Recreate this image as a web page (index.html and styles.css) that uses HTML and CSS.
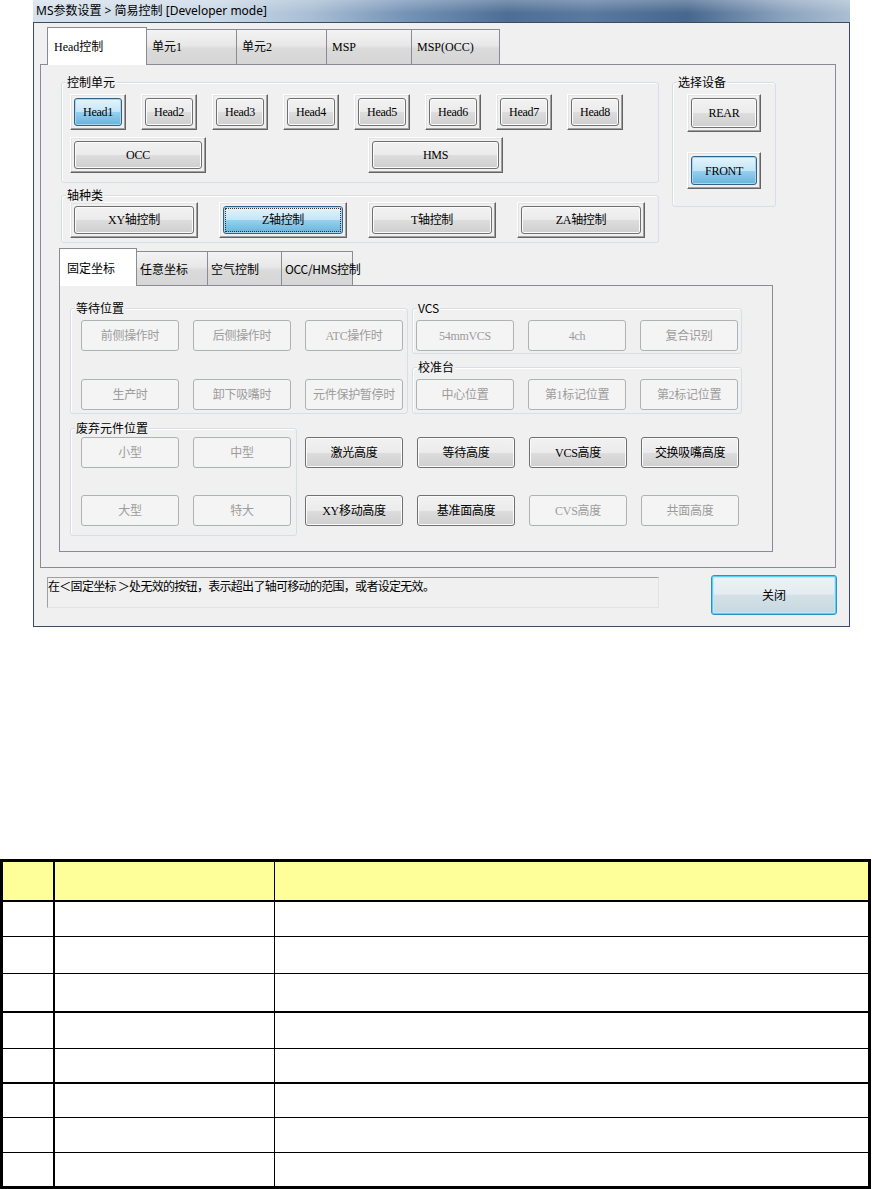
FILE: index.html
```html
<!DOCTYPE html>
<html lang="zh-CN">
<head>
<meta charset="utf-8">
<title>MS参数设置 &gt; 简易控制</title>
<link rel="stylesheet" href="styles.css">
</head>
<body>
<div class="window">
  <div class="titlebar"><span class="title">MS参数设置 &gt; 简易控制 [Developer mode]</span></div>
  <div class="win-body">
    <div class="tabs main-tabs">
      <div class="tab active w-head">Head控制</div>
      <div class="tab w-u1">单元1</div>
      <div class="tab w-u2">单元2</div>
      <div class="tab w-msp">MSP</div>
      <div class="tab w-mspocc">MSP(OCC)</div>
    </div>
    <div class="panel main-panel">
      <div class="top-area">
        <div class="left-col">
          <div class="group g-unit">
            <span class="glabel">控制单元</span>
            <div class="head-row">
              <div class="frame f-head"><div class="btn blue">Head1</div></div>
              <div class="frame f-head"><div class="btn">Head2</div></div>
              <div class="frame f-head"><div class="btn">Head3</div></div>
              <div class="frame f-head"><div class="btn">Head4</div></div>
              <div class="frame f-head"><div class="btn">Head5</div></div>
              <div class="frame f-head"><div class="btn">Head6</div></div>
              <div class="frame f-head"><div class="btn">Head7</div></div>
              <div class="frame f-head"><div class="btn">Head8</div></div>
            </div>
            <div class="occ-row">
              <div class="frame f-wide"><div class="btn">OCC</div></div>
              <div class="frame f-wide f-hms"><div class="btn">HMS</div></div>
            </div>
          </div>
          <div class="group g-axis">
            <span class="glabel">轴种类</span>
            <div class="axis-row">
              <div class="frame f-axis"><div class="btn">XY轴控制</div></div>
              <div class="frame f-axis"><div class="btn blue focus">Z轴控制</div></div>
              <div class="frame f-axis"><div class="btn">T轴控制</div></div>
              <div class="frame f-axis"><div class="btn">ZA轴控制</div></div>
            </div>
          </div>
        </div>
        <div class="group g-dev">
          <span class="glabel">选择设备</span>
          <div class="frame f-dev"><div class="btn">REAR</div></div>
          <div class="frame f-dev f-front"><div class="btn blue">FRONT</div></div>
        </div>
      </div>

      <div class="tabs sub-tabs">
        <div class="tab stab active w-fix">固定坐标</div>
        <div class="tab stab w-any">任意坐标</div>
        <div class="tab stab w-air">空气控制</div>
        <div class="tab stab w-occ">OCC/HMS控制</div>
      </div>
      <div class="panel sub-panel">
        <div class="sp-top">
          <div class="group g-wait">
            <span class="glabel">等待位置</span>
            <div class="btn-grid cols3">
              <div class="btn dis">前侧操作时</div>
              <div class="btn dis">后侧操作时</div>
              <div class="btn dis">ATC操作时</div>
              <div class="btn dis">生产时</div>
              <div class="btn dis">卸下吸嘴时</div>
              <div class="btn dis">元件保护暂停时</div>
            </div>
          </div>
          <div class="sp-right">
            <div class="group g-vcs">
              <span class="glabel">VCS</span>
              <div class="btn-grid cols3">
                <div class="btn dis">54mmVCS</div>
                <div class="btn dis">4ch</div>
                <div class="btn dis">复合识别</div>
              </div>
            </div>
            <div class="group g-cal">
              <span class="glabel">校准台</span>
              <div class="btn-grid cols3">
                <div class="btn dis">中心位置</div>
                <div class="btn dis">第1标记位置</div>
                <div class="btn dis">第2标记位置</div>
              </div>
            </div>
          </div>
        </div>
        <div class="sp-bottom">
          <div class="group g-waste">
            <span class="glabel">废弃元件位置</span>
            <div class="btn-grid cols2">
              <div class="btn dis">小型</div>
              <div class="btn dis">中型</div>
              <div class="btn dis">大型</div>
              <div class="btn dis">特大</div>
            </div>
          </div>
          <div class="btn-grid cols4 act-grid">
            <div class="btn">激光高度</div>
            <div class="btn">等待高度</div>
            <div class="btn">VCS高度</div>
            <div class="btn">交换吸嘴高度</div>
            <div class="btn">XY移动高度</div>
            <div class="btn">基准面高度</div>
            <div class="btn dis">CVS高度</div>
            <div class="btn dis">共面高度</div>
          </div>
        </div>
      </div>
    </div>
    <div class="status-row">
      <div class="status">在＜固定坐标 ＞处无效的按钮，表示超出了轴可移动的范围，或者设定无效。</div>
      <div class="btn close-btn">关闭</div>
    </div>
  </div>
</div>

<table class="grid-table">
  <tr class="r-head"><td class="c1"></td><td class="c2"></td><td class="c3"></td></tr>
  <tr class="r1"><td class="c1"></td><td class="c2"></td><td class="c3"></td></tr>
  <tr class="r2"><td class="c1"></td><td class="c2"></td><td class="c3"></td></tr>
  <tr class="r3 thick"><td class="c1"></td><td class="c2"></td><td class="c3"></td></tr>
  <tr class="r4"><td class="c1"></td><td class="c2"></td><td class="c3"></td></tr>
  <tr class="r5 thick"><td class="c1"></td><td class="c2"></td><td class="c3"></td></tr>
  <tr class="r6"><td class="c1"></td><td class="c2"></td><td class="c3"></td></tr>
  <tr class="r7"><td class="c1"></td><td class="c2"></td><td class="c3"></td></tr>
  <tr class="r8 last"><td class="c1"></td><td class="c2"></td><td class="c3"></td></tr>
</table>
</body>
</html>
```

FILE: styles.css
```css
html, body {
  margin: 0;
  padding: 0;
  background: #ffffff;
}

body {
  font-family: "Noto Sans CJK SC", sans-serif;
  font-size: 12px;
  color: #000;
}

/* ---------- window ---------- */
.window {
  margin-left: 33px;
  width: 817px;
}

.titlebar {
  height: 22px;
  box-sizing: border-box;
  padding-left: 3px;
  display: flex;
  align-items: center;
  background:
    linear-gradient(180deg, rgba(255,255,255,0.25) 0%, rgba(255,255,255,0) 60%),
    linear-gradient(90deg, #d6e1ec 0%, #cbd9e7 22%, #a9bed4 34%, #7392b5 46%, #4e6e95 58%, #5a799f 68%, #47678e 80%, #8ba3be 92%, #abbed2 100%);
}

.title {
  font-family: "Noto Sans", "Noto Sans CJK SC", sans-serif;
  font-size: 12px;
  line-height: 16px;
  color: #000;
}

.win-body {
  height: 605px;
  box-sizing: border-box;
  border: 1px solid #3a4c61;
  background: #f0f0f0;
  padding-top: 4px;
}

/* ---------- tabs ---------- */
.tabs {
  display: flex;
  align-items: flex-end;
  position: relative;
  z-index: 1;
}

.main-tabs {
  margin-left: 13px;
  height: 37px;
}

.tab {
  box-sizing: border-box;
  height: 35px;
  margin-left: -1px;
  padding-left: 5px;
  display: flex;
  align-items: center;
  border: 1px solid #898c95;
  border-bottom: none;
  background: linear-gradient(180deg, #f3f3f3 0%, #e8e8e8 45%, #dadada 55%, #d6d6d6 100%);
  font-family: "Liberation Serif", "Noto Sans CJK SC", serif;
  font-size: 12px;
  line-height: 14px;
  white-space: nowrap;
}

.tab:first-child {
  margin-left: 0;
}

.tab.active {
  height: 38px;
  margin-bottom: -1px;
  padding-left: 6px;
  background: #ffffff;
  position: relative;
  z-index: 2;
}

.w-head { width: 100px; }
.w-u1 { width: 91px; }
.w-u2 { width: 91px; }
.w-msp { width: 86px; }
.w-mspocc { width: 89px; }

.sub-tabs {
  margin-left: 18px;
  margin-top: 5px;
  height: 37px;
}

.stab {
  height: 34px;
  padding-left: 3px;
  font-family: "Noto Sans CJK SC", sans-serif;
}

.stab.active {
  height: 38px;
  padding-left: 7px;
}

.w-fix { width: 78px; }
.w-any { width: 72px; }
.w-air { width: 75px; }
.w-occ { width: 72px; letter-spacing: -0.3px; }

/* ---------- panels ---------- */
.panel {
  box-sizing: border-box;
  border: 1px solid #898c95;
  background: #f0f0f0;
}

.main-panel {
  margin-left: 6px;
  width: 796px;
  height: 504px;
}

.sub-panel {
  margin-left: 18px;
  width: 714px;
  height: 267px;
}

/* ---------- group boxes ---------- */
.group {
  position: relative;
  box-sizing: border-box;
  border: 1px solid #d5dfe5;
  border-radius: 3px;
  box-shadow: inset 1px 1px 0 #ffffff;
}

.glabel {
  position: absolute;
  top: -9px;
  left: 4px;
  padding: 0 1px;
  background: #f0f0f0;
  font-size: 12px;
  line-height: 16px;
  white-space: nowrap;
}

.top-area {
  display: flex;
  align-items: flex-start;
  margin-top: 17px;
}

.left-col {
  margin-left: 20px;
  width: 598px;
}

.g-unit {
  height: 101px;
  padding: 11px 0 0 8px;
}

.head-row {
  display: flex;
  gap: 15px;
}

.occ-row {
  display: flex;
  margin-top: 7px;
}

.g-axis {
  margin-top: 12px;
  height: 48px;
  padding: 6px 0 0 8px;
}

.axis-row {
  display: flex;
  gap: 21px;
}

.g-dev {
  margin-left: 13px;
  width: 104px;
  height: 125px;
  padding: 11px 0 0 14px;
}

/* ---------- 3D frame around buttons ---------- */
.frame {
  box-sizing: border-box;
  display: flex;
  padding: 3px;
  border: 1px solid;
  border-color: #ffffff #646464 #646464 #ffffff;
  box-shadow: inset -1px -1px 0 #a0a0a0, inset 1px 1px 0 #e3e3e3;
}

.frame > .btn {
  flex: 1;
}

.f-head { width: 56px; height: 36px; }
.f-wide { width: 136px; height: 36px; }
.f-hms { width: 135px; margin-left: 162px; }
.f-axis { width: 128px; height: 36px; }
.f-dev { width: 74px; height: 38px; }
.f-front { margin-top: 20px; height: 37px; }

/* ---------- buttons ---------- */
.btn {
  box-sizing: border-box;
  display: flex;
  align-items: center;
  justify-content: center;
  border: 1px solid #707070;
  border-radius: 3px;
  background: linear-gradient(180deg, #f2f2f2 0%, #ebebeb 50%, #dddddd 50%, #cfcfcf 100%);
  box-shadow: inset 0 0 0 1px #fbfbfb;
  font-family: "Liberation Serif", "Noto Sans CJK SC", serif;
  font-size: 12px;
  line-height: 14px;
  color: #000;
  white-space: nowrap;
  letter-spacing: -0.3px;
}

.btn.blue {
  border-color: #2c628b;
  background: linear-gradient(180deg, #e5f4fc 0%, #c4e5f6 50%, #98d1ef 50%, #68b3db 100%);
  box-shadow: inset 0 0 0 1px #a9d6ee;
}

.btn.focus {
  outline: 1px dotted #4a2a20;
  outline-offset: -3px;
}

.btn.dis {
  border-color: #adb2b5;
  background: #f4f4f4;
  box-shadow: none;
  color: #9c9c9c;
}

.btn-grid {
  display: grid;
  grid-auto-rows: 31px;
  column-gap: 14px;
}

.cols2 { grid-template-columns: repeat(2, 98px); }
.cols3 { grid-template-columns: repeat(3, 98px); }
.cols4 { grid-template-columns: repeat(4, 98px); }

/* ---------- sub panel layout ---------- */
.sp-top {
  display: flex;
  align-items: flex-start;
  margin-top: 22px;
}

.g-wait {
  margin-left: 10px;
  width: 338px;
  height: 106px;
  padding: 11px 0 0 10px;
}

.g-wait .btn-grid {
  row-gap: 28px;
}

.sp-right {
  margin-left: 4px;
  width: 330px;
}

.g-vcs {
  height: 46px;
  padding: 11px 0 0 3px;
}

.g-cal {
  margin-top: 13px;
  height: 47px;
  padding: 11px 0 0 3px;
}

.sp-bottom {
  display: flex;
  align-items: flex-start;
  margin-top: 14px;
}

.g-waste {
  margin-left: 10px;
  width: 227px;
  height: 108px;
  padding: 8px 0 0 10px;
}

.g-waste .btn-grid {
  row-gap: 27px;
}

.act-grid {
  margin-left: 8px;
  margin-top: 9px;
  row-gap: 27px;
}

/* ---------- status row ---------- */
.status-row {
  display: flex;
  align-items: flex-start;
  margin-top: 7px;
  margin-left: 13px;
}

.status {
  box-sizing: border-box;
  margin-top: 2px;
  width: 612px;
  height: 31px;
  padding-top: 1px;
  border: 1px solid;
  border-color: #a0a0a0 #e3e3e3 #e3e3e3 #a0a0a0;
  font-size: 12px;
  line-height: 14px;
  letter-spacing: -0.7px;
  white-space: nowrap;
}

.close-btn {
  margin-left: 52px;
  width: 126px;
  height: 40px;
  border-color: #2f8fc6;
  background: linear-gradient(180deg, #edf3f6 0%, #e4ecf1 48%, #d3e0e7 50%, #c8d8e0 100%);
  box-shadow: inset 0 0 0 1px #5ccff4, inset 0 0 0 2px #bfe8f7;
  font-family: "Noto Sans CJK SC", sans-serif;
  letter-spacing: 0;
}

/* ---------- table ---------- */
.grid-table {
  margin-top: 232px;
  width: 871px;
  table-layout: fixed;
  border: 3px solid #000;
  border-collapse: separate;
  border-spacing: 0;
}

.grid-table td {
  box-sizing: border-box;
  padding: 0;
  font-size: 0;
  line-height: 0;
  border-bottom: 1px solid #000;
}

.grid-table .c1 { width: 52px; border-right: 2px solid #000; }
.grid-table .c2 { width: 220px; border-right: 1px solid #000; }
.grid-table .c3 { width: 593px; }

.grid-table .r-head td {
  background: #ffff99;
  border-bottom: 2px solid #000;
}

.grid-table .thick td { border-bottom: 2px solid #000; }
.grid-table .last td { border-bottom: none; }

.r-head { height: 40px; }
.r1 { height: 35px; }
.r2 { height: 37px; }
.r3 { height: 39px; }
.r4 { height: 36px; }
.r5 { height: 35px; }
.r6 { height: 34px; }
.r7 { height: 35px; }
.r8 { height: 33px; }
```
